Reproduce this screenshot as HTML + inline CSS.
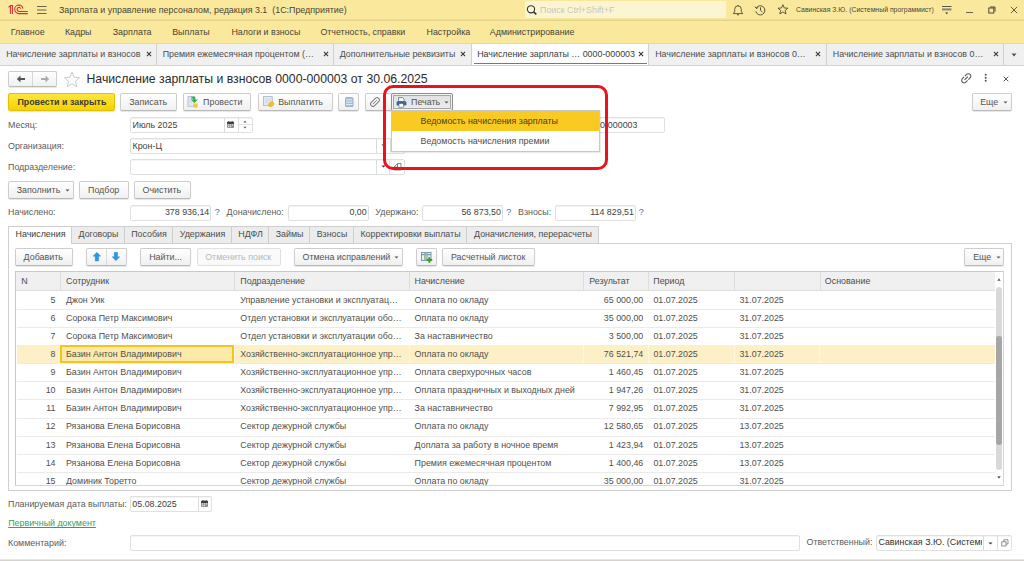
<!DOCTYPE html>
<html><head><meta charset="utf-8">
<style>
*{box-sizing:border-box;margin:0;padding:0}
html,body{width:1024px;height:561px;overflow:hidden;background:#fff;font-family:"Liberation Sans",sans-serif;font-size:8.9px;color:#4d4d4d}
.a{position:absolute}
.t{position:absolute;white-space:nowrap}
.btn{position:absolute;border:1px solid #cdcdcd;border-bottom-color:#b9b9b9;border-radius:2px;background:linear-gradient(#ffffff,#f0f0f0);box-shadow:0 1px 1px rgba(0,0,0,.10)}
.fld{position:absolute;border:1px solid #e0e0e0;border-radius:2px;background:#fff;box-shadow:inset 0 1px 0 #f4f4f4}
.vl{position:absolute;width:1px;background:#dcdcdc}
</style></head><body>

<div class="a" style="left:0px;top:0px;width:1024.00px;height:19.00px;background:#fae99c"></div>
<div class="a" style="left:0px;top:19px;width:1024.00px;height:1.00px;background:#f0de92"></div>
<div class="a" style="left:0px;top:20px;width:1024.00px;height:1.00px;background:#e6d48a"></div>
<div class="a" style="left:0px;top:21px;width:1024.00px;height:22.00px;background:#fae99c"></div>
<div class="a" style="left:0px;top:43px;width:1024.00px;height:1.00px;background:#ead98e"></div>
<svg class="a" style="left:4px;top:2px;" width="30" height="16" viewBox="0 0 30 16"><g stroke="#dc2b33" stroke-width="1.05" fill="none"><path d="M4.6 5.4 L6.4 3.4 H8.4 V12 M6.4 3.4 V12"/><path d="M23.8 11.6 H15 A4.3 4.3 0 0 1 15 3 A4.2 4.2 0 0 1 18.9 6.6"/><path d="M23.8 9.5 H15.3 A2.1 2.1 0 0 1 15.3 5.2 A2.1 2.1 0 0 1 16.7 6.6"/></g></svg>
<svg class="a" style="left:37px;top:5px;" width="10" height="10" viewBox="0 0 10 10"><path d="M0 1.5h9.5M0 5h9.5M0 8.5h9.5" stroke="#6b6350" stroke-width="1.1"/></svg>
<div class="t" style="left:59px;top:0.60px;line-height:18px;height:18px;color:#4a4535;">Зарплата и управление персоналом, редакция 3.1&nbsp; (1С:Предприятие)</div>
<div class="a" style="left:525px;top:1px;width:200.50px;height:16.60px;background:#fcf5d2;border-radius:1px"></div>
<svg class="a" style="left:526px;top:5px;" width="12" height="10" viewBox="0 0 12 10"><circle cx="5" cy="4.3" r="3.6" stroke="#333" stroke-width="1.1" fill="none"/><path d="M7.6 6.9 L10.3 9.4" stroke="#333" stroke-width="1.6"/></svg>
<div class="t" style="left:540px;top:0.50px;line-height:18px;height:18px;color:#c9c6c0;">Поиск Ctrl+Shift+F</div>
<svg class="a" style="left:732px;top:4px;" width="12" height="12" viewBox="0 0 12 12"><path d="M1.2 9.6 H10.8 L9.3 7.8 V5.4 A3.3 3.6 0 0 0 2.7 5.4 V7.8 Z" stroke="#48432f" stroke-width=".85" fill="none" stroke-linejoin="round"/><path d="M5 10.8 h2" stroke="#48432f" stroke-width="1.1"/><circle cx="6" cy="1.5" r=".55" fill="#48432f"/></svg>
<svg class="a" style="left:754px;top:4px;" width="13" height="12" viewBox="0 0 13 12"><path d="M2.3 4 A4.6 4.6 0 1 1 1.8 7.4" stroke="#48432f" stroke-width=".9" fill="none"/><path d="M1 2.6 L2.4 4.6 L4.3 3.3" stroke="#48432f" stroke-width=".9" fill="none"/><path d="M6.5 3.3 V6.3 L8.4 8" stroke="#48432f" stroke-width=".9" fill="none"/></svg>
<svg class="a" style="left:776.5px;top:4.3px;" width="12" height="11" viewBox="0 0 12 11"><path d="M5.9 0.7 L7.3 4 L10.8 4.2 L8.1 6.5 L9 9.9 L5.9 8 L2.8 9.9 L3.7 6.5 L1 4.2 L4.5 4 Z" stroke="#48432f" stroke-width=".85" fill="none" stroke-linejoin="round"/></svg>
<div class="t" style="left:796px;top:0.80px;line-height:18px;height:18px;font-size:6.9px;color:#4a4535;">Савинская З.Ю. (Системный программист)</div>
<svg class="a" style="left:941px;top:4px;" width="12" height="12" viewBox="0 0 12 12"><path d="M1 2.5h9.5" stroke="#5c5645" stroke-width="1"/><path d="M1 5.2h9.5" stroke="#8c8470" stroke-width="1.6"/><path d="M1 6.6h9.5" stroke="#b5ad90" stroke-width=".8"/><path d="M4.2 8.6h3l-1.5 1.6z" fill="#333"/></svg>
<div class="a" style="left:966px;top:12px;width:7.00px;height:1.00px;background:#6a6350"></div>
<svg class="a" style="left:988px;top:6px;" width="8" height="8" viewBox="0 0 8 8"><rect x="0.8" y="2" width="5" height="5" stroke="#4e4838" stroke-width="1" fill="none"/><path d="M2 1 H7 V5.6" stroke="#4e4838" stroke-width="1" fill="none"/></svg>
<svg class="a" style="left:1009.9px;top:5.5px;" width="8" height="8" viewBox="0 0 8 8"><path d="M0.9 0.9L7.1 7.1M7.1 0.9L0.9 7.1" stroke="#4e4838" stroke-width=".9"/></svg>
<div class="t" style="left:10.700000000000001px;top:22.70px;line-height:18px;height:18px;color:#48443a;">Главное</div>
<div class="t" style="left:64.9px;top:22.70px;line-height:18px;height:18px;color:#48443a;">Кадры</div>
<div class="t" style="left:112.7px;top:22.70px;line-height:18px;height:18px;color:#48443a;">Зарплата</div>
<div class="t" style="left:172.20000000000002px;top:22.70px;line-height:18px;height:18px;color:#48443a;">Выплаты</div>
<div class="t" style="left:231.4px;top:22.70px;line-height:18px;height:18px;color:#48443a;">Налоги и взносы</div>
<div class="t" style="left:320.4px;top:22.70px;line-height:18px;height:18px;color:#48443a;">Отчетность, справки</div>
<div class="t" style="left:426.5px;top:22.70px;line-height:18px;height:18px;color:#48443a;">Настройка</div>
<div class="t" style="left:489.79999999999995px;top:22.70px;line-height:18px;height:18px;color:#48443a;">Администрирование</div>
<div class="a" style="left:0px;top:43.5px;width:1024.00px;height:21.50px;background:#f0f0f0"></div>
<div class="a" style="left:0px;top:65px;width:1024.00px;height:1.00px;background:#d2d2d2"></div>
<div class="a" style="left:472px;top:43.5px;width:176.50px;height:21.50px;background:#fff"></div>
<div class="a" style="left:473.5px;top:62.5px;width:173.00px;height:1.80px;background:#2ea35a"></div>
<div class="a" style="left:155.9px;top:43.5px;width:1.00px;height:21.50px;background:#d0d0d0"></div>
<div class="a" style="left:333.1px;top:43.5px;width:1.00px;height:21.50px;background:#d0d0d0"></div>
<div class="a" style="left:470.8px;top:43.5px;width:1.00px;height:21.50px;background:#d0d0d0"></div>
<div class="a" style="left:648.1px;top:43.5px;width:1.00px;height:21.50px;background:#d0d0d0"></div>
<div class="a" style="left:825.8px;top:43.5px;width:1.00px;height:21.50px;background:#d0d0d0"></div>
<div class="a" style="left:1003.4px;top:43.5px;width:1.00px;height:21.50px;background:#d0d0d0"></div>
<div class="t" style="left:6.2px;top:45.30px;line-height:18px;height:18px;color:#4d4d4d;">Начисление зарплаты и взносов</div>
<svg class="a" style="left:145.9px;top:51.1px;" width="6" height="6" viewBox="0 0 6 6"><path d="M0.9 0.9L5.1 5.1M5.1 0.9L0.9 5.1" stroke="#3a3a3a" stroke-width="1.1"/></svg>
<div class="t" style="left:162.7px;top:45.30px;line-height:18px;height:18px;color:#4d4d4d;">Премия ежемесячная процентом (…</div>
<svg class="a" style="left:323px;top:51.1px;" width="6" height="6" viewBox="0 0 6 6"><path d="M0.9 0.9L5.1 5.1M5.1 0.9L0.9 5.1" stroke="#3a3a3a" stroke-width="1.1"/></svg>
<div class="t" style="left:339.7px;top:45.30px;line-height:18px;height:18px;color:#4d4d4d;">Дополнительные реквизиты</div>
<svg class="a" style="left:460px;top:51.1px;" width="6" height="6" viewBox="0 0 6 6"><path d="M0.9 0.9L5.1 5.1M5.1 0.9L0.9 5.1" stroke="#3a3a3a" stroke-width="1.1"/></svg>
<div class="t" style="left:477.2px;top:45.30px;line-height:18px;height:18px;color:#3c3c3c;">Начисление зарплаты … 0000-000003</div>
<svg class="a" style="left:638.2px;top:51.1px;" width="6" height="6" viewBox="0 0 6 6"><path d="M0.9 0.9L5.1 5.1M5.1 0.9L0.9 5.1" stroke="#3a3a3a" stroke-width="1.1"/></svg>
<div class="t" style="left:655.2px;top:45.30px;line-height:18px;height:18px;color:#4d4d4d;">Начисление зарплаты и взносов 0…</div>
<svg class="a" style="left:815px;top:51.1px;" width="6" height="6" viewBox="0 0 6 6"><path d="M0.9 0.9L5.1 5.1M5.1 0.9L0.9 5.1" stroke="#3a3a3a" stroke-width="1.1"/></svg>
<div class="t" style="left:832.8px;top:45.30px;line-height:18px;height:18px;color:#4d4d4d;">Начисление зарплаты и взносов 0…</div>
<svg class="a" style="left:993.2px;top:51.1px;" width="6" height="6" viewBox="0 0 6 6"><path d="M0.9 0.9L5.1 5.1M5.1 0.9L0.9 5.1" stroke="#3a3a3a" stroke-width="1.1"/></svg>
<svg class="a" style="left:1011px;top:53px;" width="6" height="4" viewBox="0 0 6 4"><path d="M0.5 0.5h5l-2.5 3z" fill="#555"/></svg>
<div class="btn" style="left:8px;top:71px;width:49px;height:16px;border-radius:2px"></div>
<div class="a" style="left:32px;top:72px;width:1.00px;height:14.00px;background:#d6d6d6"></div>
<svg class="a" style="left:16px;top:75px;" width="10" height="8" viewBox="0 0 10 8"><path d="M9 4H3" stroke="#555" stroke-width="2"/><path d="M4.5 0.5L0.8 4L4.5 7.5Z" fill="#555"/></svg>
<svg class="a" style="left:40px;top:75px;" width="10" height="8" viewBox="0 0 10 8"><path d="M1 4H7" stroke="#aaa" stroke-width="2"/><path d="M5.5 0.5L9.2 4L5.5 7.5Z" fill="#aaa"/></svg>
<svg class="a" style="left:63px;top:71px;" width="18" height="17" viewBox="0 0 18 17"><path d="M9 1.2 L11.2 6.3 L16.6 6.7 L12.5 10.2 L13.8 15.6 L9 12.8 L4.2 15.6 L5.5 10.2 L1.4 6.7 L6.8 6.3 Z" stroke="#c8ccd2" stroke-width="1" fill="none" stroke-linejoin="round"/></svg>
<div class="t" style="left:86.5px;top:68.50px;line-height:20px;height:20px;font-size:12.25px;color:#2b2b2b;">Начисление зарплаты и взносов 0000-000003 от 30.06.2025</div>
<svg class="a" style="left:959.8px;top:71.8px;" width="12.5" height="12.5" viewBox="0 0 12.5 12.5"><g transform="translate(6.25 6.25) rotate(-45) scale(0.6) translate(-12 -12)"><path d="M3.9 12c0-1.71 1.39-3.1 3.1-3.1h4V7H7c-2.76 0-5 2.24-5 5s2.24 5 5 5h4v-1.9H7c-1.71 0-3.1-1.39-3.1-3.1zM8 13h8v-2H8v2zm9-6h-4v1.9h4c1.71 0 3.1 1.39 3.1 3.1s-1.39 3.1-3.1 3.1h-4V17h4c2.76 0 5-2.24 5-5s-2.24-5-5-5z" fill="#5c5c5c"/></g></svg>
<svg class="a" style="left:984px;top:73px;" width="4" height="10" viewBox="0 0 4 10"><circle cx="1.7" cy="1.8" r="1" fill="#555"/><circle cx="1.7" cy="4.8" r="1" fill="#555"/><circle cx="1.7" cy="7.8" r="1" fill="#555"/></svg>
<svg class="a" style="left:1003px;top:76px;" width="6" height="6" viewBox="0 0 6 6"><path d="M0.7 0.7L5.3 5.3M5.3 0.7L0.7 5.3" stroke="#555" stroke-width="1"/></svg>
<div class="a" style="left:8px;top:93px;width:107px;height:18px;border:1px solid #e0c200;border-radius:2px;background:linear-gradient(#ffe640,#f5d200);box-shadow:0 1px 1px rgba(0,0,0,.12)"></div>
<div class="t" style="left:17.4px;top:92.60px;line-height:18px;height:18px;color:#3c3c30;font-weight:bold;">Провести и закрыть</div>
<div class="btn" style="left:120px;top:93px;width:57px;height:18px;"></div>
<div class="t" style="left:129.2px;top:92.60px;line-height:18px;height:18px;color:#545454;">Записать</div>
<div class="btn" style="left:183px;top:93px;width:68px;height:18px;"></div>
<svg class="a" style="left:186.5px;top:95.5px;" width="13" height="13" viewBox="0 0 13 13"><rect x="1" y="0.6" width="6.3" height="9.6" fill="#e6ebf2" stroke="#aab6c6" stroke-width=".8"/><path d="M2.2 3h4M2.2 4.8h4M2.2 6.6h3" stroke="#c5cfdb" stroke-width=".7"/><path d="M4.3 0.8 H8.3 V3.6 H10.9 L7.4 7 L3.9 3.6 H6.1 V2.6 H4.3 Z" fill="#33b04e"/><rect x="6.3" y="6.8" width="4.4" height="4.9" rx="1.6" fill="#efc637"/><ellipse cx="8.5" cy="7.6" rx="2.1" ry=".9" fill="#f8df7a"/></svg>
<div class="t" style="left:203.1px;top:92.60px;line-height:18px;height:18px;color:#545454;">Провести</div>
<div class="btn" style="left:258px;top:93px;width:75px;height:18px;"></div>
<svg class="a" style="left:262.5px;top:96.3px;" width="12" height="12" viewBox="0 0 12 12"><rect x="0.6" y="0.6" width="8.6" height="9" fill="#e6ebf2" stroke="#a3b3c6" stroke-width=".8"/><path d="M2 3h5.5M2 4.8h5.5M2 6.6h3.5" stroke="#c5cfdb" stroke-width=".7"/><ellipse cx="8.2" cy="8.3" rx="2.9" ry="2.1" transform="rotate(-35 8.2 8.3)" fill="#f0c232" stroke="#d8a81c" stroke-width=".6"/></svg>
<div class="t" style="left:278.2px;top:92.60px;line-height:18px;height:18px;color:#545454;">Выплатить</div>
<div class="btn" style="left:338px;top:93px;width:21px;height:18px;"></div>
<svg class="a" style="left:345px;top:96.8px;" width="8.5" height="10.5" viewBox="0 0 8.5 10.5"><rect x="0.5" y="0.5" width="7.5" height="9.5" rx="1.3" fill="#a7bfd8" stroke="#8aa6c4" stroke-width=".8"/><path d="M1 2.9h6.5M1 5.2h6.5M1 7.5h6.5" stroke="#eef4fa" stroke-width=".8"/></svg>
<div class="btn" style="left:365px;top:93px;width:28px;height:18px;"></div>
<svg class="a" style="left:368.5px;top:95.5px;" width="12" height="12" viewBox="0 0 12 12"><g transform="rotate(-45 6 6)"><rect x="0.8" y="3.6" width="10.4" height="4.8" rx="2.4" stroke="#7a7a7a" stroke-width="1" fill="none"/><path d="M3 6 H8.6" stroke="#7a7a7a" stroke-width=".9"/></g></svg>
<div class="a" style="left:391px;top:93px;width:62px;height:18px;border:1px solid #8e8e8e;border-radius:2px;background:#f3f3f3"><div class="a" style="left:1px;top:1px;right:1px;bottom:1px;border:1px solid #a6a6a6;background:linear-gradient(#e2e2e2,#ebebeb)"></div></div>
<svg class="a" style="left:395.5px;top:96.5px;" width="11.5" height="11" viewBox="0 0 11.5 11"><path d="M2.6 0.6 H6.6 L8 2 V4.6 H2.6 Z" fill="#fff" stroke="#4a6d98" stroke-width=".8"/><rect x="0.6" y="4.3" width="9.8" height="4.3" rx="1.3" fill="#3f6693"/><rect x="3" y="6.6" width="4.6" height="3.6" fill="#fff" stroke="#3f6693" stroke-width=".6"/></svg>
<div class="t" style="left:411.1px;top:92.60px;line-height:18px;height:18px;color:#545454;">Печать</div>
<svg class="a" style="left:444.0px;top:100.5px;" width="5" height="3" viewBox="0 0 5 3"><path d="M0.5 0.5h4l-2 2z" fill="#555"/></svg>
<div class="btn" style="left:972px;top:93px;width:40px;height:18px;"></div>
<div class="t" style="left:980.2px;top:92.60px;line-height:18px;height:18px;color:#545454;">Еще</div>
<svg class="a" style="left:1002.9px;top:100.5px;" width="5" height="3" viewBox="0 0 5 3"><path d="M0.5 0.5h4l-2 2z" fill="#555"/></svg>
<div class="t" style="left:8px;top:115.70px;line-height:18px;height:18px;color:#5c5c5c;">Месяц:</div>
<div class="fld" style="left:130px;top:117px;width:123px;height:16px;"></div>
<div class="vl" style="left:224.3px;top:117.5px;height:14.5px"></div>
<div class="vl" style="left:238px;top:117.5px;height:14.5px"></div>
<div class="a" style="left:238.5px;top:124.3px;width:13.00px;height:0.80px;background:#e2e2e2"></div>
<svg class="a" style="left:227.2px;top:120.7px;" width="7" height="7.5" viewBox="0 0 7 7.5"><rect x="0" y="0.8" width="7" height="6.2" rx="1" fill="#8c8c8c"/><rect x="0" y="0.8" width="7" height="2.2" rx=".8" fill="#3e3e3e"/><circle cx="1.8" cy="0.9" r=".7" fill="#3e3e3e"/><circle cx="5.2" cy="0.9" r=".7" fill="#3e3e3e"/><path d="M0.9 3.9h1.3M2.9 3.9h1.3M4.9 3.9h1.3M0.9 5.7h1.3M2.9 5.7h1.3" stroke="#f0f0f0" stroke-width="1"/></svg>
<svg class="a" style="left:242px;top:120px;" width="6" height="9" viewBox="0 0 6 9"><path d="M1.4 2.4h3.2l-1.6-1.6z" fill="#555"/><path d="M1.4 6.8h3.2l-1.6 1.6z" fill="#555"/></svg>
<div class="t" style="left:132.5px;top:115.70px;line-height:18px;height:18px;color:#424242;">Июль 2025</div>
<div class="t" style="left:8px;top:137.00px;line-height:18px;height:18px;color:#5c5c5c;">Организация:</div>
<div class="fld" style="left:130px;top:138px;width:275px;height:16px;"></div>
<div class="vl" style="left:376px;top:138.6px;height:14.4px"></div>
<div class="vl" style="left:389.6px;top:138.6px;height:14.4px"></div>
<div class="t" style="left:132.5px;top:136.80px;line-height:18px;height:18px;color:#424242;">Крон-Ц</div>
<svg class="a" style="left:380.5px;top:144.0px;" width="5" height="3" viewBox="0 0 5 3"><path d="M0.5 0.5h4l-2 2z" fill="#333"/></svg>
<div class="t" style="left:8px;top:157.80px;line-height:18px;height:18px;color:#5c5c5c;">Подразделение:</div>
<div class="fld" style="left:130px;top:159px;width:261px;height:16px;"></div>
<div class="fld" style="left:389px;top:159px;width:16px;height:16px;"></div>
<div class="vl" style="left:376px;top:159.5px;height:14.4px"></div>
<svg class="a" style="left:380.5px;top:165.0px;" width="5" height="3" viewBox="0 0 5 3"><path d="M0.5 0.5h4l-2 2z" fill="#333"/></svg>
<svg class="a" style="left:392.5px;top:162px;" width="9" height="9" viewBox="0 0 9 9"><path d="M1 8 H8 V1.5 H4.5 L1 5 Z M4.5 1.5 V5 H1" stroke="#777" stroke-width=".9" fill="none"/></svg>
<div class="fld" style="left:560px;top:117px;width:105px;height:16px;"></div>
<div class="t" style="right:386.5px;top:115.70px;line-height:18px;height:18px;color:#424242;">0000-000003</div>
<div class="btn" style="left:8px;top:181px;width:66px;height:18px;"></div>
<div class="t" style="left:16.7px;top:180.70px;line-height:18px;height:18px;color:#545454;">Заполнить</div>
<svg class="a" style="left:64.9px;top:188.5px;" width="5" height="3" viewBox="0 0 5 3"><path d="M0.5 0.5h4l-2 2z" fill="#555"/></svg>
<div class="btn" style="left:79px;top:181px;width:50px;height:18px;"></div>
<div class="t" style="left:88px;top:180.70px;line-height:18px;height:18px;color:#545454;">Подбор</div>
<div class="btn" style="left:134px;top:181px;width:57px;height:18px;"></div>
<div class="t" style="left:142.5px;top:180.70px;line-height:18px;height:18px;color:#545454;">Очистить</div>
<div class="t" style="left:8px;top:203.10px;line-height:18px;height:18px;color:#5c5c5c;">Начислено:</div>
<div class="fld" style="left:130px;top:205px;width:81px;height:16px;"></div>
<div class="t" style="right:814.7px;top:203.30px;line-height:18px;height:18px;color:#424242;">378 936,14</div>
<div class="t" style="left:214.6px;top:203.10px;line-height:18px;height:18px;font-size:9.5px;color:#2f7fc8;">?</div>
<div class="t" style="left:226.6px;top:203.10px;line-height:18px;height:18px;color:#5c5c5c;">Доначислено:</div>
<div class="fld" style="left:288px;top:205px;width:81px;height:16px;"></div>
<div class="t" style="right:657.3px;top:203.30px;line-height:18px;height:18px;color:#424242;">0,00</div>
<div class="t" style="left:375.3px;top:203.10px;line-height:18px;height:18px;color:#5c5c5c;">Удержано:</div>
<div class="fld" style="left:422px;top:205px;width:81px;height:16px;"></div>
<div class="t" style="right:523.1px;top:203.30px;line-height:18px;height:18px;color:#424242;">56 873,50</div>
<div class="t" style="left:506.1px;top:203.10px;line-height:18px;height:18px;font-size:9.5px;color:#2f7fc8;">?</div>
<div class="t" style="left:518px;top:203.10px;line-height:18px;height:18px;color:#5c5c5c;">Взносы:</div>
<div class="fld" style="left:555px;top:205px;width:81px;height:16px;"></div>
<div class="t" style="right:390px;top:203.30px;line-height:18px;height:18px;color:#424242;">114 829,51</div>
<div class="t" style="left:638.6px;top:203.10px;line-height:18px;height:18px;font-size:9.5px;color:#2f7fc8;">?</div>
<div class="a" style="left:8px;top:243px;width:1004.00px;height:248.00px;border:1px solid #cfcfcf;background:#fff"></div>
<div class="a" style="left:8px;top:226px;width:64px;height:18px;border:1px solid #cfcfcf;border-bottom:none;background:#fff"></div>
<div class="t" style="left:8.5px;width:64px;text-align:center;top:225.3px;line-height:18px;color:#3c3c3c">Начисления</div>
<div class="a" style="left:71px;top:226px;width:54px;height:18px;border:1px solid #cfcfcf;background:#ececec"></div>
<div class="t" style="left:71.5px;width:54px;text-align:center;top:225.3px;line-height:18px;color:#4d4d4d">Договоры</div>
<div class="a" style="left:124px;top:226px;width:49px;height:18px;border:1px solid #cfcfcf;background:#ececec"></div>
<div class="t" style="left:124.5px;width:49px;text-align:center;top:225.3px;line-height:18px;color:#4d4d4d">Пособия</div>
<div class="a" style="left:172px;top:226px;width:60px;height:18px;border:1px solid #cfcfcf;background:#ececec"></div>
<div class="t" style="left:172.5px;width:60px;text-align:center;top:225.3px;line-height:18px;color:#4d4d4d">Удержания</div>
<div class="a" style="left:231px;top:226px;width:38px;height:18px;border:1px solid #cfcfcf;background:#ececec"></div>
<div class="t" style="left:231.5px;width:38px;text-align:center;top:225.3px;line-height:18px;color:#4d4d4d">НДФЛ</div>
<div class="a" style="left:268px;top:226px;width:42px;height:18px;border:1px solid #cfcfcf;background:#ececec"></div>
<div class="t" style="left:268.5px;width:42px;text-align:center;top:225.3px;line-height:18px;color:#4d4d4d">Займы</div>
<div class="a" style="left:309px;top:226px;width:45px;height:18px;border:1px solid #cfcfcf;background:#ececec"></div>
<div class="t" style="left:309.5px;width:45px;text-align:center;top:225.3px;line-height:18px;color:#4d4d4d">Взносы</div>
<div class="a" style="left:353px;top:226px;width:114px;height:18px;border:1px solid #cfcfcf;background:#ececec"></div>
<div class="t" style="left:353.5px;width:114px;text-align:center;top:225.3px;line-height:18px;color:#4d4d4d">Корректировки выплаты</div>
<div class="a" style="left:466px;top:226px;width:133px;height:18px;border:1px solid #cfcfcf;background:#ececec"></div>
<div class="t" style="left:466.5px;width:133px;text-align:center;top:225.3px;line-height:18px;color:#4d4d4d">Доначисления, перерасчеты</div>
<div class="a" style="left:72px;top:226px;width:527.00px;height:1.00px;background:#cfcfcf"></div>
<div class="btn" style="left:15px;top:248px;width:58px;height:18px;"></div>
<div class="t" style="left:23.6px;top:248.20px;line-height:18px;height:18px;color:#545454;">Добавить</div>
<div class="btn" style="left:86px;top:248px;width:41px;height:18px;"></div>
<div class="a" style="left:106.2px;top:249px;width:1.00px;height:16.00px;background:#dadada"></div>
<svg class="a" style="left:92.6px;top:252px;" width="8" height="9.5" viewBox="0 0 8 9.5"><path d="M3.9 0.3 L7.7 4.2 H5.6 V9 H2.2 V4.2 H0.1 Z" fill="#2b97e0" stroke="#1f85cc" stroke-width=".4" stroke-linejoin="round"/></svg>
<svg class="a" style="left:112.2px;top:252px;" width="8" height="9.5" viewBox="0 0 8 9.5"><path d="M3.9 8.7 L7.7 4.8 H5.6 V0.2 H2.2 V4.8 H0.1 Z" fill="#2b97e0" stroke="#1f85cc" stroke-width=".4" stroke-linejoin="round"/></svg>
<div class="btn" style="left:140px;top:248px;width:51px;height:18px;"></div>
<div class="t" style="left:149.2px;top:248.20px;line-height:18px;height:18px;color:#545454;">Найти...</div>
<div class="btn" style="left:197px;top:248px;width:84px;height:18px;border-color:#e0e0e0;box-shadow:none;background:#fafafa"></div>
<div class="t" style="left:205.2px;top:248.20px;line-height:18px;height:18px;color:#b8b8b8;">Отменить поиск</div>
<div class="btn" style="left:294px;top:248px;width:109px;height:18px;"></div>
<div class="t" style="left:302.5px;top:248.20px;line-height:18px;height:18px;color:#545454;">Отмена исправлений</div>
<svg class="a" style="left:393.7px;top:256.0px;" width="5" height="3" viewBox="0 0 5 3"><path d="M0.5 0.5h4l-2 2z" fill="#555"/></svg>
<div class="btn" style="left:416px;top:248px;width:21px;height:18px;"></div>
<svg class="a" style="left:420.5px;top:252.3px;" width="13" height="11" viewBox="0 0 13 11"><rect x="0.5" y="0.5" width="9.5" height="8" fill="#eef2f7" stroke="#7d95b5" stroke-width="1"/><path d="M0.5 2.6h9.5" stroke="#7d95b5" stroke-width="1.2"/><path d="M3.5 0.5v8M6.7 0.5v8" stroke="#8fa5c0" stroke-width=".8"/><rect x="3.6" y="0.8" width="2.4" height="7.5" fill="#8cc46a" opacity=".8"/><path d="M8.4 5.2v5.6M5.6 8h5.6" stroke="#3a9a2a" stroke-width="2"/></svg>
<div class="btn" style="left:442px;top:248px;width:93px;height:18px;"></div>
<div class="t" style="left:451px;top:248.20px;line-height:18px;height:18px;color:#545454;">Расчетный листок</div>
<div class="btn" style="left:964px;top:248px;width:40px;height:18px;"></div>
<div class="t" style="left:973.2px;top:248.00px;line-height:18px;height:18px;color:#545454;">Еще</div>
<svg class="a" style="left:995.7px;top:256.0px;" width="5" height="3" viewBox="0 0 5 3"><path d="M0.5 0.5h4l-2 2z" fill="#555"/></svg>
<div class="a" style="left:15px;top:271.4px;width:989.30px;height:214.60px;border:1px solid #c9c9c9;border-right-color:#d6d6d6;border-bottom-color:#d6d6d6;background:#fff"></div>
<div class="a" style="left:16px;top:272.4px;width:978.60px;height:18.20px;background:#f0f0f0;border-bottom:1px solid #dedede"></div>
<div class="a" style="left:59.9px;top:272.4px;width:1.00px;height:17.90px;background:#dcdcdc"></div>
<div class="a" style="left:233.9px;top:272.4px;width:1.00px;height:17.90px;background:#dcdcdc"></div>
<div class="a" style="left:408.9px;top:272.4px;width:1.00px;height:17.90px;background:#dcdcdc"></div>
<div class="a" style="left:582.8px;top:272.4px;width:1.00px;height:17.90px;background:#dcdcdc"></div>
<div class="a" style="left:647.8px;top:272.4px;width:1.00px;height:17.90px;background:#dcdcdc"></div>
<div class="a" style="left:734.0px;top:272.4px;width:1.00px;height:17.90px;background:#dcdcdc"></div>
<div class="a" style="left:819.5px;top:272.4px;width:1.00px;height:17.90px;background:#dcdcdc"></div>
<div class="t" style="left:21.2px;top:271.60px;line-height:18px;height:18px;color:#4d4d4d;">N</div>
<div class="t" style="left:66px;top:271.60px;line-height:18px;height:18px;color:#4d4d4d;">Сотрудник</div>
<div class="t" style="left:240.3px;top:271.60px;line-height:18px;height:18px;color:#4d4d4d;">Подразделение</div>
<div class="t" style="left:414.6px;top:271.60px;line-height:18px;height:18px;color:#4d4d4d;">Начисление</div>
<div class="t" style="left:589.2px;top:271.60px;line-height:18px;height:18px;color:#4d4d4d;">Результат</div>
<div class="t" style="left:653.3px;top:271.60px;line-height:18px;height:18px;color:#4d4d4d;">Период</div>
<div class="t" style="left:824.8px;top:271.60px;line-height:18px;height:18px;color:#4d4d4d;">Основание</div>
<div class="a" style="left:16.8px;top:290.7px;width:978px;height:194.6px;overflow:hidden">
<div class="a" style="left:0;top:18.30px;width:978px;height:1px;background:#ebebeb"></div>
<div class="t" style="right:939.30px;top:-0.10px;line-height:18px;color:#505050">5</div>
<div class="t" style="left:49.20px;top:-0.10px;line-height:18px;color:#505050">Джон Уик</div>
<div class="t" style="left:223.50px;top:-0.10px;line-height:18px;color:#505050">Управление установки и эксплуатац…</div>
<div class="t" style="left:397.80px;top:-0.10px;line-height:18px;color:#505050">Оплата по окладу</div>
<div class="t" style="right:351.50px;top:-0.10px;line-height:18px;color:#505050">65 000,00</div>
<div class="t" style="left:636.60px;top:-0.10px;line-height:18px;color:#505050">01.07.2025</div>
<div class="t" style="left:722.60px;top:-0.10px;line-height:18px;color:#505050">31.07.2025</div>
<div class="a" style="left:0;top:36.30px;width:978px;height:1px;background:#ebebeb"></div>
<div class="t" style="right:939.30px;top:18.03px;line-height:18px;color:#505050">6</div>
<div class="t" style="left:49.20px;top:18.03px;line-height:18px;color:#505050">Сорока Петр Максимович</div>
<div class="t" style="left:223.50px;top:18.03px;line-height:18px;color:#505050">Отдел установки и эксплуатации обо…</div>
<div class="t" style="left:397.80px;top:18.03px;line-height:18px;color:#505050">Оплата по окладу</div>
<div class="t" style="right:351.50px;top:18.03px;line-height:18px;color:#505050">35 000,00</div>
<div class="t" style="left:636.60px;top:18.03px;line-height:18px;color:#505050">01.07.2025</div>
<div class="t" style="left:722.60px;top:18.03px;line-height:18px;color:#505050">31.07.2025</div>
<div class="a" style="left:0;top:54.30px;width:978px;height:1px;background:#ebebeb"></div>
<div class="t" style="right:939.30px;top:36.16px;line-height:18px;color:#505050">7</div>
<div class="t" style="left:49.20px;top:36.16px;line-height:18px;color:#505050">Сорока Петр Максимович</div>
<div class="t" style="left:223.50px;top:36.16px;line-height:18px;color:#505050">Отдел установки и эксплуатации обо…</div>
<div class="t" style="left:397.80px;top:36.16px;line-height:18px;color:#505050">За наставничество</div>
<div class="t" style="right:351.50px;top:36.16px;line-height:18px;color:#505050">3 500,00</div>
<div class="t" style="left:636.60px;top:36.16px;line-height:18px;color:#505050">01.07.2025</div>
<div class="t" style="left:722.60px;top:36.16px;line-height:18px;color:#505050">31.07.2025</div>
<div class="a" style="left:0;top:54.30px;width:978px;height:18px;background:#fdf0c6"></div>
<div class="a" style="left:217.10px;top:54.30px;width:1px;height:18px;background:#fef7e0"></div>
<div class="a" style="left:392.10px;top:54.30px;width:1px;height:18px;background:#fef7e0"></div>
<div class="a" style="left:566.00px;top:54.30px;width:1px;height:18px;background:#fef7e0"></div>
<div class="a" style="left:631.00px;top:54.30px;width:1px;height:18px;background:#fef7e0"></div>
<div class="a" style="left:717.20px;top:54.30px;width:1px;height:18px;background:#fef7e0"></div>
<div class="a" style="left:802.70px;top:54.30px;width:1px;height:18px;background:#fef7e0"></div>
<div class="a" style="left:43.60px;top:54.30px;width:174.00px;height:18px;background:#fde9a8;border:2px solid #f4c41f"></div>
<div class="a" style="left:0;top:72.30px;width:978px;height:1px;background:#ebebeb"></div>
<div class="t" style="right:939.30px;top:54.29px;line-height:18px;color:#505050">8</div>
<div class="t" style="left:49.20px;top:54.29px;line-height:18px;color:#505050">Базин Антон Владимирович</div>
<div class="t" style="left:223.50px;top:54.29px;line-height:18px;color:#505050">Хозяйственно-эксплуатационное упр…</div>
<div class="t" style="left:397.80px;top:54.29px;line-height:18px;color:#505050">Оплата по окладу</div>
<div class="t" style="right:351.50px;top:54.29px;line-height:18px;color:#505050">76 521,74</div>
<div class="t" style="left:636.60px;top:54.29px;line-height:18px;color:#505050">01.07.2025</div>
<div class="t" style="left:722.60px;top:54.29px;line-height:18px;color:#505050">31.07.2025</div>
<div class="a" style="left:0;top:90.30px;width:978px;height:1px;background:#ebebeb"></div>
<div class="t" style="right:939.30px;top:72.42px;line-height:18px;color:#505050">9</div>
<div class="t" style="left:49.20px;top:72.42px;line-height:18px;color:#505050">Базин Антон Владимирович</div>
<div class="t" style="left:223.50px;top:72.42px;line-height:18px;color:#505050">Хозяйственно-эксплуатационное упр…</div>
<div class="t" style="left:397.80px;top:72.42px;line-height:18px;color:#505050">Оплата сверхурочных часов</div>
<div class="t" style="right:351.50px;top:72.42px;line-height:18px;color:#505050">1 460,45</div>
<div class="t" style="left:636.60px;top:72.42px;line-height:18px;color:#505050">01.07.2025</div>
<div class="t" style="left:722.60px;top:72.42px;line-height:18px;color:#505050">31.07.2025</div>
<div class="a" style="left:0;top:108.30px;width:978px;height:1px;background:#ebebeb"></div>
<div class="t" style="right:939.30px;top:90.55px;line-height:18px;color:#505050">10</div>
<div class="t" style="left:49.20px;top:90.55px;line-height:18px;color:#505050">Базин Антон Владимирович</div>
<div class="t" style="left:223.50px;top:90.55px;line-height:18px;color:#505050">Хозяйственно-эксплуатационное упр…</div>
<div class="t" style="left:397.80px;top:90.55px;line-height:18px;color:#505050">Оплата праздничных и выходных дней</div>
<div class="t" style="right:351.50px;top:90.55px;line-height:18px;color:#505050">1 947,26</div>
<div class="t" style="left:636.60px;top:90.55px;line-height:18px;color:#505050">01.07.2025</div>
<div class="t" style="left:722.60px;top:90.55px;line-height:18px;color:#505050">31.07.2025</div>
<div class="a" style="left:0;top:127.30px;width:978px;height:1px;background:#ebebeb"></div>
<div class="t" style="right:939.30px;top:108.68px;line-height:18px;color:#505050">11</div>
<div class="t" style="left:49.20px;top:108.68px;line-height:18px;color:#505050">Базин Антон Владимирович</div>
<div class="t" style="left:223.50px;top:108.68px;line-height:18px;color:#505050">Хозяйственно-эксплуатационное упр…</div>
<div class="t" style="left:397.80px;top:108.68px;line-height:18px;color:#505050">За наставничество</div>
<div class="t" style="right:351.50px;top:108.68px;line-height:18px;color:#505050">7 992,95</div>
<div class="t" style="left:636.60px;top:108.68px;line-height:18px;color:#505050">01.07.2025</div>
<div class="t" style="left:722.60px;top:108.68px;line-height:18px;color:#505050">31.07.2025</div>
<div class="a" style="left:0;top:145.30px;width:978px;height:1px;background:#ebebeb"></div>
<div class="t" style="right:939.30px;top:126.81px;line-height:18px;color:#505050">12</div>
<div class="t" style="left:49.20px;top:126.81px;line-height:18px;color:#505050">Рязанова Елена Борисовна</div>
<div class="t" style="left:223.50px;top:126.81px;line-height:18px;color:#505050">Сектор дежурной службы</div>
<div class="t" style="left:397.80px;top:126.81px;line-height:18px;color:#505050">Оплата по окладу</div>
<div class="t" style="right:351.50px;top:126.81px;line-height:18px;color:#505050">12 580,65</div>
<div class="t" style="left:636.60px;top:126.81px;line-height:18px;color:#505050">01.07.2025</div>
<div class="t" style="left:722.60px;top:126.81px;line-height:18px;color:#505050">13.07.2025</div>
<div class="a" style="left:0;top:163.30px;width:978px;height:1px;background:#ebebeb"></div>
<div class="t" style="right:939.30px;top:144.94px;line-height:18px;color:#505050">13</div>
<div class="t" style="left:49.20px;top:144.94px;line-height:18px;color:#505050">Рязанова Елена Борисовна</div>
<div class="t" style="left:223.50px;top:144.94px;line-height:18px;color:#505050">Сектор дежурной службы</div>
<div class="t" style="left:397.80px;top:144.94px;line-height:18px;color:#505050">Доплата за работу в ночное время</div>
<div class="t" style="right:351.50px;top:144.94px;line-height:18px;color:#505050">1 423,94</div>
<div class="t" style="left:636.60px;top:144.94px;line-height:18px;color:#505050">01.07.2025</div>
<div class="t" style="left:722.60px;top:144.94px;line-height:18px;color:#505050">13.07.2025</div>
<div class="a" style="left:0;top:181.30px;width:978px;height:1px;background:#ebebeb"></div>
<div class="t" style="right:939.30px;top:163.07px;line-height:18px;color:#505050">14</div>
<div class="t" style="left:49.20px;top:163.07px;line-height:18px;color:#505050">Рязанова Елена Борисовна</div>
<div class="t" style="left:223.50px;top:163.07px;line-height:18px;color:#505050">Сектор дежурной службы</div>
<div class="t" style="left:397.80px;top:163.07px;line-height:18px;color:#505050">Премия ежемесячная процентом</div>
<div class="t" style="right:351.50px;top:163.07px;line-height:18px;color:#505050">1 400,46</div>
<div class="t" style="left:636.60px;top:163.07px;line-height:18px;color:#505050">01.07.2025</div>
<div class="t" style="left:722.60px;top:163.07px;line-height:18px;color:#505050">13.07.2025</div>
<div class="t" style="right:939.30px;top:181.20px;line-height:18px;color:#505050">15</div>
<div class="t" style="left:49.20px;top:181.20px;line-height:18px;color:#505050">Доминик Торетто</div>
<div class="t" style="left:223.50px;top:181.20px;line-height:18px;color:#505050">Сектор дежурной службы</div>
<div class="t" style="left:397.80px;top:181.20px;line-height:18px;color:#505050">Оплата по окладу</div>
<div class="t" style="right:351.50px;top:181.20px;line-height:18px;color:#505050">35 000,00</div>
<div class="t" style="left:636.60px;top:181.20px;line-height:18px;color:#505050">01.07.2025</div>
<div class="t" style="left:722.60px;top:181.20px;line-height:18px;color:#505050">31.07.2025</div>
</div>
<div class="a" style="left:996.3px;top:287px;width:5.80px;height:183.00px;background:#d9d9d9;border-radius:3px"></div>
<div class="a" style="left:996.3px;top:335.7px;width:5.80px;height:109.30px;background:#a6a6a6;border-radius:3px"></div>
<svg class="a" style="left:997px;top:277.5px;" width="4" height="3" viewBox="0 0 4 3"><path d="M0.3 2.7h3.4L2 0.3z" fill="#555"/></svg>
<svg class="a" style="left:997px;top:475.5px;" width="4" height="3" viewBox="0 0 4 3"><path d="M0.3 0.3h3.4L2 2.7z" fill="#555"/></svg>
<div class="t" style="left:8px;top:494.80px;line-height:18px;height:18px;color:#5c5c5c;">Планируемая дата выплаты:</div>
<div class="fld" style="left:130px;top:496px;width:82px;height:16px;"></div>
<div class="vl" style="left:197.8px;top:497px;height:14px"></div>
<svg class="a" style="left:201.2px;top:500.1px;" width="7" height="7.5" viewBox="0 0 7 7.5"><rect x="0" y="0.8" width="7" height="6.2" rx="1" fill="#8c8c8c"/><rect x="0" y="0.8" width="7" height="2.2" rx=".8" fill="#3e3e3e"/><circle cx="1.8" cy="0.9" r=".7" fill="#3e3e3e"/><circle cx="5.2" cy="0.9" r=".7" fill="#3e3e3e"/><path d="M0.9 3.9h1.3M2.9 3.9h1.3M4.9 3.9h1.3M0.9 5.7h1.3M2.9 5.7h1.3" stroke="#f0f0f0" stroke-width="1"/></svg>
<div class="t" style="left:132.3px;top:494.80px;line-height:18px;height:18px;color:#424242;">05.08.2025</div>
<div class="t" style="left:8.2px;top:514.10px;line-height:18px;height:18px;color:#2fa262;text-decoration:underline;text-decoration-skip-ink:none;text-underline-offset:0.6px;">Первичный документ</div>
<div class="t" style="left:8px;top:533.50px;line-height:18px;height:18px;color:#5c5c5c;">Комментарий:</div>
<div class="fld" style="left:130px;top:535px;width:670px;height:16px;"></div>
<div class="t" style="left:806.5px;top:533.40px;line-height:18px;height:18px;color:#5c5c5c;">Ответственный:</div>
<div class="fld" style="left:876px;top:535px;width:136px;height:16px;"></div>
<div class="t" style="left:878.4px;top:533.4px;line-height:18px;width:104px;overflow:hidden;color:#333">Савинская З.Ю. (Системный программист)</div>
<div class="vl" style="left:983px;top:535.3px;height:14.6px"></div>
<div class="vl" style="left:997px;top:535.3px;height:14.6px"></div>
<svg class="a" style="left:987.5px;top:541.5px;" width="5" height="3" viewBox="0 0 5 3"><path d="M0.5 0.5h4l-2 2z" fill="#333"/></svg>
<svg class="a" style="left:1000.5px;top:538.5px;" width="8" height="8" viewBox="0 0 8 8"><rect x="0.8" y="2.8" width="4.2" height="4.2" stroke="#777" stroke-width=".8" fill="none"/><path d="M2.8 2.8 V0.8 H7 V5 H5" stroke="#777" stroke-width=".8" fill="none"/></svg>
<div class="a" style="left:0px;top:558.5px;width:1024.00px;height:2.50px;background:linear-gradient(#faf9f7,#e0ddd8 40%,#cfcbc4)"></div>
<div class="a" style="left:391px;top:110px;width:209px;height:42px;border:1px solid #c8c8c8;background:#fff;box-shadow:1px 1px 1px rgba(0,0,0,.08)"></div>
<div class="a" style="left:392px;top:111px;width:207.00px;height:20.00px;background:#f9cb22"></div>
<div class="t" style="left:420.5px;top:112.00px;line-height:18px;height:18px;color:#4a3f10;">Ведомость начисления зарплаты</div>
<div class="t" style="left:420.5px;top:132.00px;line-height:18px;height:18px;color:#4d4d4d;">Ведомость начисления премии</div>
<div class="a" style="left:383px;top:85px;width:225px;height:85px;border:3px solid #e8131d;border-radius:10px"></div>
</body></html>
